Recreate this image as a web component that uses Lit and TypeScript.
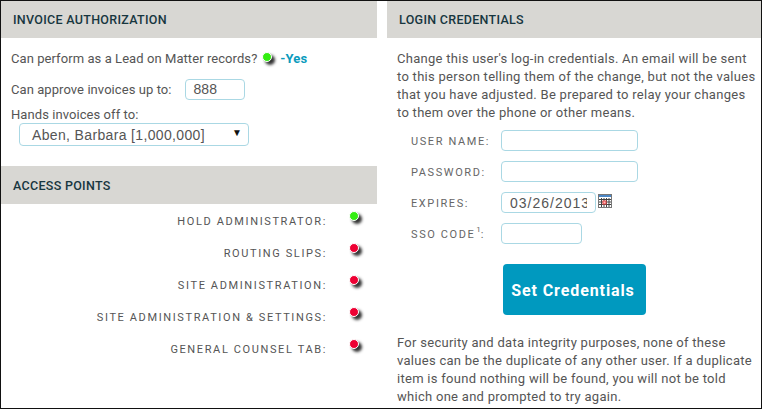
import { LitElement, html, css } from "lit";
import { customElement } from "lit/decorators.js";

const points: [string, boolean][] = [
  ["HOLD ADMINISTRATOR:", true],
  ["ROUTING SLIPS:", false],
  ["SITE ADMINISTRATION:", false],
  ["SITE ADMINISTRATION & SETTINGS:", false],
  ["GENERAL COUNSEL TAB:", false],
];

@customElement("app-root")
export class AppRoot extends LitElement {
  static styles = css`
    :host { display: block; width: 762px; height: 409px; box-sizing: border-box; border: 1px solid #111; background: #fff; overflow: hidden; font-family: Roboto, "Liberation Sans", sans-serif; font-size: 13px; color: #555; letter-spacing: 0.28px; }
    .cols { display: flex; gap: 10px; }
    .left { width: 376px; flex: none; }
    .right { width: 374px; flex: none; }
    .head { height: 37px; background: #d8d7d3; color: #17363f; font-size: 12.5px; font-weight: 500; letter-spacing: 0.3px; display: flex; align-items: center; padding-left: 12px; box-sizing: border-box; }
    .left .second { height: 38px; }
    .inv { padding: 12px 0 0 10px; height: 128px; box-sizing: border-box; letter-spacing: 0.07px; }
    .lead { display: flex; align-items: center; height: 16px; }
    .yes { color: #0a9bbd; font-weight: 700; margin-left: 8px; letter-spacing: 0.1px; }
    .dot { width: 8px; height: 8px; border-radius: 50%; flex: none; box-shadow: 3px 3px 3px 0 #333; border: 1px solid #fff; }
    .dot.g { background: #33ee11; }
    .dot.r { background: #ee0033; }
    .lead .dot { margin-left: 5px; position: relative; top: -1px; }
    .approve { display: flex; align-items: center; margin-top: 13px; height: 21px; }
    .approve label { margin-right: 13px; }
    .input { border: 1px solid #aad8e4; border-radius: 4px; box-sizing: border-box; background: #fff; font-family: "Liberation Sans", Arial, sans-serif; font-size: 14px; color: #555; letter-spacing: 0; }
    .amt { width: 60px; height: 21px; padding-left: 8px; line-height: 19px; }
    .hands { margin-top: 7px; line-height: 16px; }
    .select { margin: 0 0 0 8px; width: 230px; height: 23px; display: flex; align-items: center; justify-content: space-between; padding: 1px 6px 1px 12px; letter-spacing: 0.35px; }
    .caret { font-size: 10px; color: #111; margin-top: -4px; letter-spacing: 0; }
    .point { display: flex; justify-content: flex-end; align-items: center; height: 32px; font-size: 11px; letter-spacing: 1.62px; color: #555; padding-right: 18px; box-sizing: border-box; }
    .point .lbl { margin-right: 22px; position: relative; top: 1px; }
    .point .dot { position: relative; top: -4px; }
    .rbody { padding: 12px 0 0 10px; line-height: 18px; white-space: nowrap; }
    p { margin: 0; }
    .form { margin-top: 8px; display: grid; grid-template-columns: 104px auto; row-gap: 10px; }
    .f { display: contents; }
    .f label { font-size: 11px; letter-spacing: 1.6px; padding: 3px 0 0 14px; display: flex; align-items: center; color: #666; }
    sup { font-size: 8px; line-height: 0; letter-spacing: 0; position: relative; top: -1px; vertical-align: super; margin-left: 1px; }
    .ctl { display: flex; align-items: flex-start; gap: 2px; height: 21px; }
    .ctl .input { height: 21px; }
    .w137 { width: 137px; }
    .w95 { width: 95px; padding-left: 8px; line-height: 20px; }
    .w95 span { display: block; width: 77px; overflow: hidden; white-space: nowrap; letter-spacing: 1px; }
    .w81 { width: 81px; }
    .btn { display: block; margin: 20px 0 0 106px; width: 143px; height: 51px; background: #0099bf; color: #fff; border: 0; border-radius: 4px; font: 700 16px Roboto, sans-serif; letter-spacing: 0.9px; padding: 2px 3px 0 0; }
    .foot { margin-top: 19px; }
    .cal { display: block; margin-top: 2px; }
  `;

  render() {
    return html`
      <div class="cols">
        <div class="left">
          <div class="head">INVOICE AUTHORIZATION</div>
          <div class="inv">
            <div class="lead">Can perform as a Lead on Matter records?<span class="dot g"></span><span class="yes">-Yes</span></div>
            <div class="approve"><label>Can approve invoices up to:</label><div class="input amt">888</div></div>
            <div class="hands">Hands invoices off to:</div>
            <div class="input select"><span>Aben, Barbara [1,000,000]</span><span class="caret">▼</span></div>
          </div>
          <div class="head second">ACCESS POINTS</div>
          <div class="points">
            ${points.map(([l, on]) => html`<div class="point"><span class="lbl">${l}</span><span class="dot ${on ? "g" : "r"}"></span></div>`)}
          </div>
        </div>
        <div class="right">
          <div class="head">LOGIN CREDENTIALS</div>
          <div class="rbody">
            <p>Change this user's log-in credentials. An email will be sent<br>to this person telling them of the change, but not the values<br>that you have adjusted. Be prepared to relay your changes<br>to them over the phone or other means.</p>
            <div class="form">
              <div class="f"><label>USER NAME:</label><div class="ctl"><div class="input w137"></div></div></div>
              <div class="f"><label>PASSWORD:</label><div class="ctl"><div class="input w137"></div></div></div>
              <div class="f"><label>EXPIRES:</label><div class="ctl"><div class="input w95"><span>03/26/2013</span></div>
                <svg class="cal" width="14" height="14" viewBox="0 0 14 14">
                  <rect x="0.5" y="0.5" width="13" height="13" fill="#fff" stroke="#777"/>
                  <rect x="1" y="1" width="12" height="2" fill="#4a86c5"/>
                  <path d="M1 5.5h12M1 8h12M1 10.5h12M3.5 4v9M6 4v9M8.5 4v9M11 4v9" stroke="#444" stroke-width="1"/>
                  <rect x="5" y="7" width="3" height="3" fill="#f8c0c0" stroke="#e44"/>
                </svg></div></div>
              <div class="f"><label><span>SSO CODE<sup>1</sup>:</span></label><div class="ctl"><div class="input w81"></div></div></div>
            </div>
            <button class="btn">Set Credentials</button>
            <p class="foot">For security and data integrity purposes, none of these<br>values can be the duplicate of any other user. If a duplicate<br>item is found nothing will be found, you will not be told<br>which one and prompted to try again.</p>
          </div>
        </div>
      </div>
    `;
  }
}
